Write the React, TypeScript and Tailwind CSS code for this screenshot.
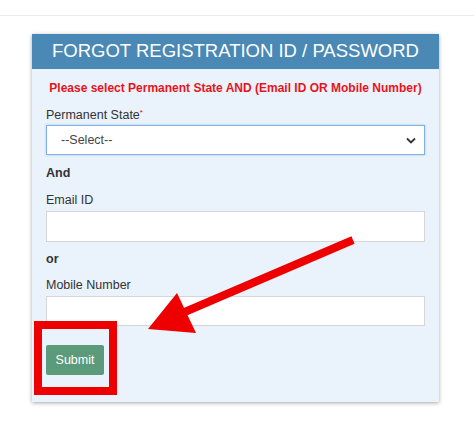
export default function App() {
  return (
    <div
      className="relative w-[474px] h-[423px] bg-white overflow-hidden"
      style={{ fontFamily: '"Liberation Sans", Arial, sans-serif' }}
    >
      <div className="h-[16px] border-b border-[#ececec]" />
      <div className="pt-[18px] pl-[32px]">
        <div className="w-[407px] bg-[#eaf2fb] shadow-[0_1px_4px_rgba(0,0,0,0.35)]">
          <div className="h-[35px] bg-[#4a89b5] flex items-center justify-center">
            <h1 className="text-white text-[18.5px] leading-none">
              FORGOT REGISTRATION ID / PASSWORD
            </h1>
          </div>
          <div className="px-[14px] pt-[12px] pb-[27px]">
            <p className="text-[#e8141b] text-[12px] font-bold text-center leading-[14px]">
              Please select Permanent State AND (Email ID OR Mobile Number)
            </p>
            <label className="block mt-[13px] text-[12.5px] text-[#333] leading-[15px]">
              Permanent State<sup className="text-[#e00] text-[8px]">*</sup>
            </label>
            <div className="mt-[2px] h-[30px] bg-white border border-[#7fb3e3] shadow-[0_0_2px_#9cc6ee] flex items-center justify-between pl-[14px] pr-[8px]">
              <span className="text-[12.5px] text-[#444]">--Select--</span>
              <svg width="10" height="7" viewBox="0 0 10 7">
                <path d="M1 1.5 L5 5.5 L9 1.5" fill="none" stroke="#333" strokeWidth="1.8" />
              </svg>
            </div>
            <p className="mt-[11px] text-[12.5px] font-bold text-[#333] leading-[15px]">And</p>
            <label className="block mt-[12px] text-[12.5px] text-[#333] leading-[15px]">Email ID</label>
            <div className="mt-[3px] h-[31px] bg-white border border-[#d6d6d6]" />
            <p className="mt-[10px] text-[12.5px] font-bold text-[#333] leading-[15px]">or</p>
            <label className="block mt-[11px] text-[12.5px] text-[#333] leading-[15px]">Mobile Number</label>
            <div className="mt-[3px] h-[30px] bg-white border border-[#d6d6d6]" />
            <button className="mt-[19px] w-[58px] h-[30px] bg-[#5b9a7a] text-white text-[12.5px] rounded-[2px]">
              Submit
            </button>
          </div>
        </div>
      </div>

      {/* annotation overlay */}
      <div className="absolute left-[34px] top-[321px] w-[83px] h-[74px] border-[8px] border-[#ee0000]" />
      <svg className="absolute left-0 top-0" width="474" height="423" viewBox="0 0 474 423">
        <line x1="353" y1="240" x2="180" y2="314" stroke="#ee0000" strokeWidth="8" />
        <polygon points="148,329 177,293 196,333" fill="#ee0000" />
      </svg>
    </div>
  );
}
